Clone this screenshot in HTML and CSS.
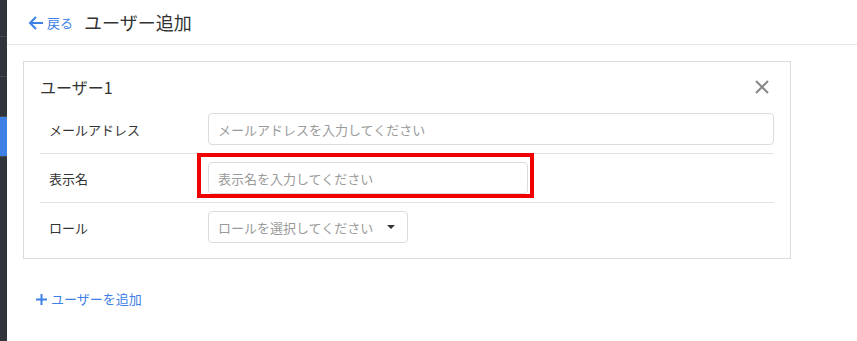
FILE: index.html
```html
<!DOCTYPE html>
<html lang="ja">
<head>
    <meta charset="UTF-8">
    <meta name="viewport" content="width=device-width, initial-scale=1.0">
    <title>ユーザー追加</title>
    <link rel="stylesheet" href="styles.css">
</head>
<body>
    <div class="layout">
        <nav class="sidebar">
            <div class="nav-item first"></div>
            <div class="nav-item"></div>
            <div class="nav-item"></div>
            <div class="nav-item active"></div>
        </nav>

        <main class="main">
            <header class="page-header">
                <a href="#" class="back-link">
                    <svg width="16" height="16" viewBox="0 0 16 16" aria-hidden="true">
                        <path d="M15 8H2.5M8 2L2 8l6 6" fill="none" stroke="currentColor" stroke-width="2"/>
                    </svg>
                    <span>戻る</span>
                </a>
                <h1 class="page-title">ユーザー追加</h1>
            </header>

            <div class="content">
                <section class="user-card">
                    <div class="card-head">
                        <h2 class="card-title">ユーザー1</h2>
                        <button class="close-btn" type="button" aria-label="削除">
                            <svg width="14" height="14" viewBox="0 0 14 14">
                                <path d="M1 1l12 12M13 1L1 13" stroke="currentColor" stroke-width="2"/>
                            </svg>
                        </button>
                    </div>

                    <div class="form-row">
                        <label for="email">メールアドレス</label>
                        <input type="email" id="email" class="field" placeholder="メールアドレスを入力してください">
                    </div>

                    <div class="form-row">
                        <label for="displayName">表示名</label>
                        <div class="highlight">
                            <input type="text" id="displayName" class="field" placeholder="表示名を入力してください">
                        </div>
                    </div>

                    <div class="form-row last">
                        <label for="role">ロール</label>
                        <div class="select-box" id="role">
                            <span>ロールを選択してください</span>
                            <span class="caret"></span>
                        </div>
                    </div>
                </section>

                <a href="#" class="add-link">
                    <svg width="11" height="11" viewBox="0 0 11 11" aria-hidden="true">
                        <path d="M5.5 0v11M0 5.5h11" stroke="currentColor" stroke-width="2"/>
                    </svg>
                    <span>ユーザーを追加</span>
                </a>
            </div>
        </main>
    </div>
</body>
</html>
```

FILE: styles.css
```css
body {
    font-family: "Noto Sans CJK JP", "Noto Sans", sans-serif;
    margin: 0;
    padding: 0;
    background-color: #fff;
    color: #333;
}
.layout {
    display: flex;
    min-height: 341px;
}
.sidebar {
    width: 7px;
    background-color: #30343b;
    flex-shrink: 0;
}
.nav-item {
    height: 39px;
    border-bottom: 1px solid #474b53;
}
.nav-item.first {
    height: 36px;
}
.nav-item.active {
    background-color: #3d80e6;
}
.main {
    flex: 1;
}
.page-header {
    height: 44px;
    display: flex;
    align-items: center;
    padding-left: 21px;
    border-bottom: 1px solid #e4e4e4;
}
.back-link {
    display: flex;
    align-items: center;
    gap: 3px;
    color: #3d80e6;
    text-decoration: none;
    font-size: 13px;
    line-height: 16px;
    margin-top: 1px;
}
.page-title {
    margin: 0 0 0 11px;
    font-size: 18px;
    font-weight: normal;
    line-height: 24px;
    color: #333;
}
.content {
    padding: 16px 0 0 16px;
}
.user-card {
    width: 734px;
    border: 1px solid #dcdcdc;
    padding: 13px 16px 7px;
}
.card-head {
    display: flex;
    align-items: center;
    justify-content: space-between;
    height: 24px;
    margin-bottom: 6px;
}
.card-title {
    margin: 0;
    font-size: 16px;
    font-weight: normal;
    line-height: 24px;
}
.close-btn {
    border: none;
    background: none;
    padding: 0;
    margin-right: 5px;
    color: #888;
    display: flex;
    cursor: pointer;
}
.form-row {
    display: flex;
    align-items: center;
    height: 48px;
    border-bottom: 1px solid #e2e2e2;
}
.form-row.last {
    border-bottom: none;
}
.form-row label {
    width: 159px;
    padding-left: 9px;
    font-size: 13px;
    flex-shrink: 0;
}
.field {
    flex: 1;
    height: 32px;
    border: 1px solid #dcdcdc;
    border-radius: 4px;
    padding: 0 9px;
    box-sizing: border-box;
    font-family: inherit;
    font-size: 13px;
    color: #333;
}
.field::placeholder {
    color: #9a9a9a;
}
.highlight {
    display: flex;
    align-self: flex-start;
    width: 320px;
    height: 32px;
    margin: -1px 0 0 -11px;
    padding: 5px 2px 0 7px;
    border: 4px solid #f00000;
}
.select-box {
    width: 200px;
    height: 32px;
    border: 1px solid #dcdcdc;
    border-radius: 4px;
    box-sizing: border-box;
    padding: 0 12px 0 9px;
    display: flex;
    align-items: center;
    justify-content: space-between;
    font-size: 13px;
    color: #9a9a9a;
}
.caret {
    width: 0;
    height: 0;
    border-left: 4px solid transparent;
    border-right: 4px solid transparent;
    border-top: 4px solid #333;
}
.add-link {
    display: inline-flex;
    align-items: center;
    gap: 4px;
    margin: 32px 0 0 13px;
    color: #3d80e6;
    text-decoration: none;
    font-size: 13px;
    line-height: 16px;
}
```
